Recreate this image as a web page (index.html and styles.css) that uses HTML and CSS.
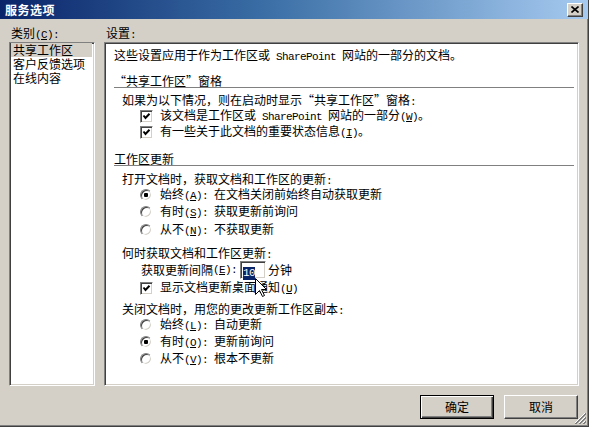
FILE: index.html
```html
<!DOCTYPE html>
<html lang="zh-CN">
<head>
<meta charset="utf-8">
<title>服务选项</title>
<link rel="stylesheet" href="styles.css">
</head>
<body>
<div class="window">
  <div class="titlebar">
    <span class="title">服务选项</span>
    <div class="close">
      <svg width="8" height="7" viewBox="0 0 8 7"><path d="M0.5 0.5 L7.5 6.5 M7.5 0.5 L0.5 6.5" stroke="#000" stroke-width="1.6"/></svg>
    </div>
  </div>
  <div class="main">
    <div class="cols">
      <div class="left">
        <div class="label">类别<span class="a">(<u>C</u>):</span></div>
        <div class="sunken listbox">
          <div class="item sel">共享工作区</div>
          <div class="item">客户反馈选项</div>
          <div class="item">在线内容</div>
        </div>
      </div>
      <div class="right">
        <div class="label">设置<span class="a">:</span></div>
        <div class="sunken panel">
          <div class="intro">这些设置应用于作为工作区或<span class="a"> SharePoint </span>网站的一部分的文档。</div>
          <div class="sect sect1">“共享工作区”窗格</div>
          <div class="row t1">如果为以下情况，则在启动时显示“共享工作区”窗格<span class="a">:</span></div>
          <div class="row opt"><span class="cb"><svg width="11" height="11" viewBox="0 0 11 11"><path d="M2.5 4.5 L4.5 7 L8.5 2.8" stroke="#000" stroke-width="2" fill="none"/></svg></span><span>该文档是工作区或<span class="a"> SharePoint </span>网站的一部分<span class="a">(<u>W</u>)</span>。</span></div>
          <div class="row opt"><span class="cb"><svg width="11" height="11" viewBox="0 0 11 11"><path d="M2.5 4.5 L4.5 7 L8.5 2.8" stroke="#000" stroke-width="2" fill="none"/></svg></span><span>有一些关于此文档的重要状态信息<span class="a">(<u>I</u>)</span>。</span></div>
          <div class="sect sect2">工作区更新</div>
          <div class="row t2">打开文档时，获取文档和工作区的更新<span class="a">:</span></div>
          <div class="row radrow"><span class="radio on"></span><span>始终<span class="a">(<u>A</u>): </span>在文档关闭前始终自动获取更新</span></div>
          <div class="row radrow"><span class="radio"></span><span>有时<span class="a">(<u>S</u>): </span>获取更新前询问</span></div>
          <div class="row radrow"><span class="radio"></span><span>从不<span class="a">(<u>N</u>): </span>不获取更新</span></div>
          <div class="row t3">何时获取文档和工作区更新<span class="a">:</span></div>
          <div class="row interval">获取更新间隔<span class="a">(<u>E</u>):</span><span class="input"><span class="a selected">10</span></span>分钟</div>
          <div class="row opt opt2"><span class="cb"><svg width="11" height="11" viewBox="0 0 11 11"><path d="M2.5 4.5 L4.5 7 L8.5 2.8" stroke="#000" stroke-width="2" fill="none"/></svg></span><span>显示文档更新桌面通知<span class="a">(<u>U</u>)</span></span></div>
          <div class="row t4">关闭文档时，用您的更改更新工作区副本<span class="a">:</span></div>
          <div class="row radrow r2"><span class="radio"></span><span>始终<span class="a">(<u>L</u>): </span>自动更新</span></div>
          <div class="row radrow r2"><span class="radio on"></span><span>有时<span class="a">(<u>O</u>): </span>更新前询问</span></div>
          <div class="row radrow r2"><span class="radio"></span><span>从不<span class="a">(<u>V</u>): </span>根本不更新</span></div>
        </div>
      </div>
    </div>
    <div class="buttons">
      <div class="btn default">确定</div>
      <div class="btn">取消</div>
    </div>
  </div>
  <svg class="cursor" width="13" height="20" viewBox="0 0 13 20"><path d="M0.5 0.5 L0.5 16.5 L4.5 12.5 L7.5 18.5 L9.5 17.5 L6.5 11.5 L11.5 11.5 Z" fill="#fff" stroke="#000" stroke-width="1"/></svg>
  <svg class="grip" width="12" height="12" viewBox="0 0 12 12">
    <path d="M11 1 L1 11 M11 5 L5 11 M11 9 L9 11" stroke="#fff" stroke-width="1"/>
    <path d="M12 1 L1 12 M12 2 L2 12 M12 5 L5 12 M12 6 L6 12 M12 9 L9 12 M12 10 L10 12" stroke="#808080" stroke-width="1"/>
  </svg>
</div>
</body>
</html>
```

FILE: styles.css
```css
* { box-sizing: border-box; }
html, body { margin: 0; padding: 0; }
body {
  width: 589px;
  height: 427px;
  overflow: hidden;
  background: #d4d0c8;
  font-family: "Noto Sans CJK SC", "Noto Sans", sans-serif;
  font-size: 12px;
  color: #000;
}
u { text-decoration: underline; text-underline-offset: 1px; }
.a {
  font-family: "Liberation Mono", "DejaVu Sans Mono", monospace;
  font-size: 11px;
  letter-spacing: -0.6px;
}
.window {
  position: relative;
  width: 589px;
  height: 427px;
  border-right: 1px solid #404040;
  border-bottom: 1px solid #404040;
  box-shadow: inset -1px -1px #808080;
  display: flex;
  flex-direction: column;
}
.titlebar {
  flex: none;
  height: 19px;
  display: flex;
  align-items: center;
  justify-content: space-between;
  padding: 0 5px 0 5px;
  background: linear-gradient(to right, #0a246a 0%, #3a6ea5 45%, #a6caf0 100%);
}
.title {
  color: #fff;
  font-weight: 700;
  font-size: 12px;
  letter-spacing: 0.5px;
  line-height: 19px;
}
.close {
  width: 16px;
  height: 14px;
  background: #d4d0c8;
  border: 1px solid;
  border-color: #fff #404040 #404040 #fff;
  box-shadow: inset -1px -1px #808080;
  display: flex;
  align-items: center;
  justify-content: center;
}
.close svg { display: block; }
.main {
  padding: 6px 9px 0 9px;
  display: flex;
  flex-direction: column;
}
.cols { display: flex; gap: 9px; }
.left { width: 86px; }
.right { width: 475px; }
.label {
  height: 17px;
  line-height: 15px;
  padding-left: 2px;
}
.sunken {
  height: 344px;
  background: #fff;
  border: 1px solid;
  border-color: #808080 #fff #fff #808080;
  box-shadow: inset 1px 1px #404040, inset -1px -1px #d4d0c8;
}
.listbox { padding: 0 2px 1px 1px; }
.item {
  height: 14px;
  line-height: 14px;
  padding-left: 2px;
  white-space: nowrap;
}
.item.sel { background: #d4d0c8; }
.panel { padding: 4px 0 0 0; }
.intro {
  height: 16px;
  line-height: 16px;
  padding-left: 9px;
  white-space: nowrap;
}
.sect {
  height: 14px;
  line-height: 13px;
  margin: 0 4px 0 9px;
  border-bottom: 1px solid #808080;
  box-shadow: 0 1px 0 #fff;
  white-space: nowrap;
}
.sect1 { margin-top: 11px; }
.sect2 { margin-top: 12px; }
.row {
  height: 16px;
  line-height: 16px;
  white-space: nowrap;
}
.t1 { margin-top: 4px; padding-left: 17px; }
.opt {
  display: flex;
  align-items: center;
  gap: 7px;
  padding-left: 35px;
}
.opt2 { height: 18px; }
.cb {
  width: 13px;
  height: 13px;
  flex: none;
  background: #fff;
  border: 1px solid;
  border-color: #808080 #fff #fff #808080;
  box-shadow: inset 1px 1px #404040, inset -1px -1px #d4d0c8;
}
.cb svg { display: block; }
.t2 { margin-top: 6px; height: 14px; line-height: 14px; padding-left: 17px; }
.radrow {
  height: 17.5px;
  display: flex;
  align-items: center;
  gap: 8px;
  padding-left: 35px;
}
.radrow.r2 { height: 17px; }
.radio {
  position: relative;
  width: 12px;
  height: 12px;
  flex: none;
  border-radius: 50%;
  background: #fff;
  border: 1px solid;
  border-color: #808080 #fff #fff #808080;
  box-shadow: inset 1px 1px #404040, inset -1px -1px #d4d0c8;
}
.radio.on::after {
  content: "";
  position: absolute;
  left: 3px;
  top: 3px;
  width: 4px;
  height: 4px;
  border-radius: 1px;
  background: #000;
}
.t3 { margin-top: 6.5px; padding-left: 17px; }
.interval {
  height: 18px;
  display: flex;
  align-items: center;
  padding-left: 36px;
}
.input {
  width: 26px;
  height: 18px;
  margin: 0 2px 0 3px;
  padding: 2px 0 0 2px;
  background: #fff;
  border: 1px solid;
  border-color: #808080 #fff #fff #808080;
  box-shadow: inset 1px 1px #404040, inset -1px -1px #d4d0c8;
  line-height: 13px;
}
.selected {
  display: inline-block;
  background: #0a246a;
  color: #fff;
  height: 13px;
  line-height: 13px;
}
.t4 { margin-top: 5px; height: 14px; line-height: 14px; padding-left: 17px; }
.buttons {
  display: flex;
  justify-content: flex-end;
  gap: 10px;
  margin-top: 9px;
  padding-right: 1px;
}
.btn {
  width: 74px;
  height: 24px;
  line-height: 21px;
  text-align: center;
  background: #d4d0c8;
  border: 1px solid;
  border-color: #fff #404040 #404040 #fff;
  box-shadow: inset -1px -1px #808080;
}
.btn.default {
  border-color: #000;
  box-shadow: inset 1px 1px #fff, inset -1px -1px #404040, inset -2px -2px #808080;
}
.cursor {
  position: absolute;
  left: 255px;
  top: 278px;
}
.grip {
  position: absolute;
  right: 2px;
  bottom: 2px;
}
```
